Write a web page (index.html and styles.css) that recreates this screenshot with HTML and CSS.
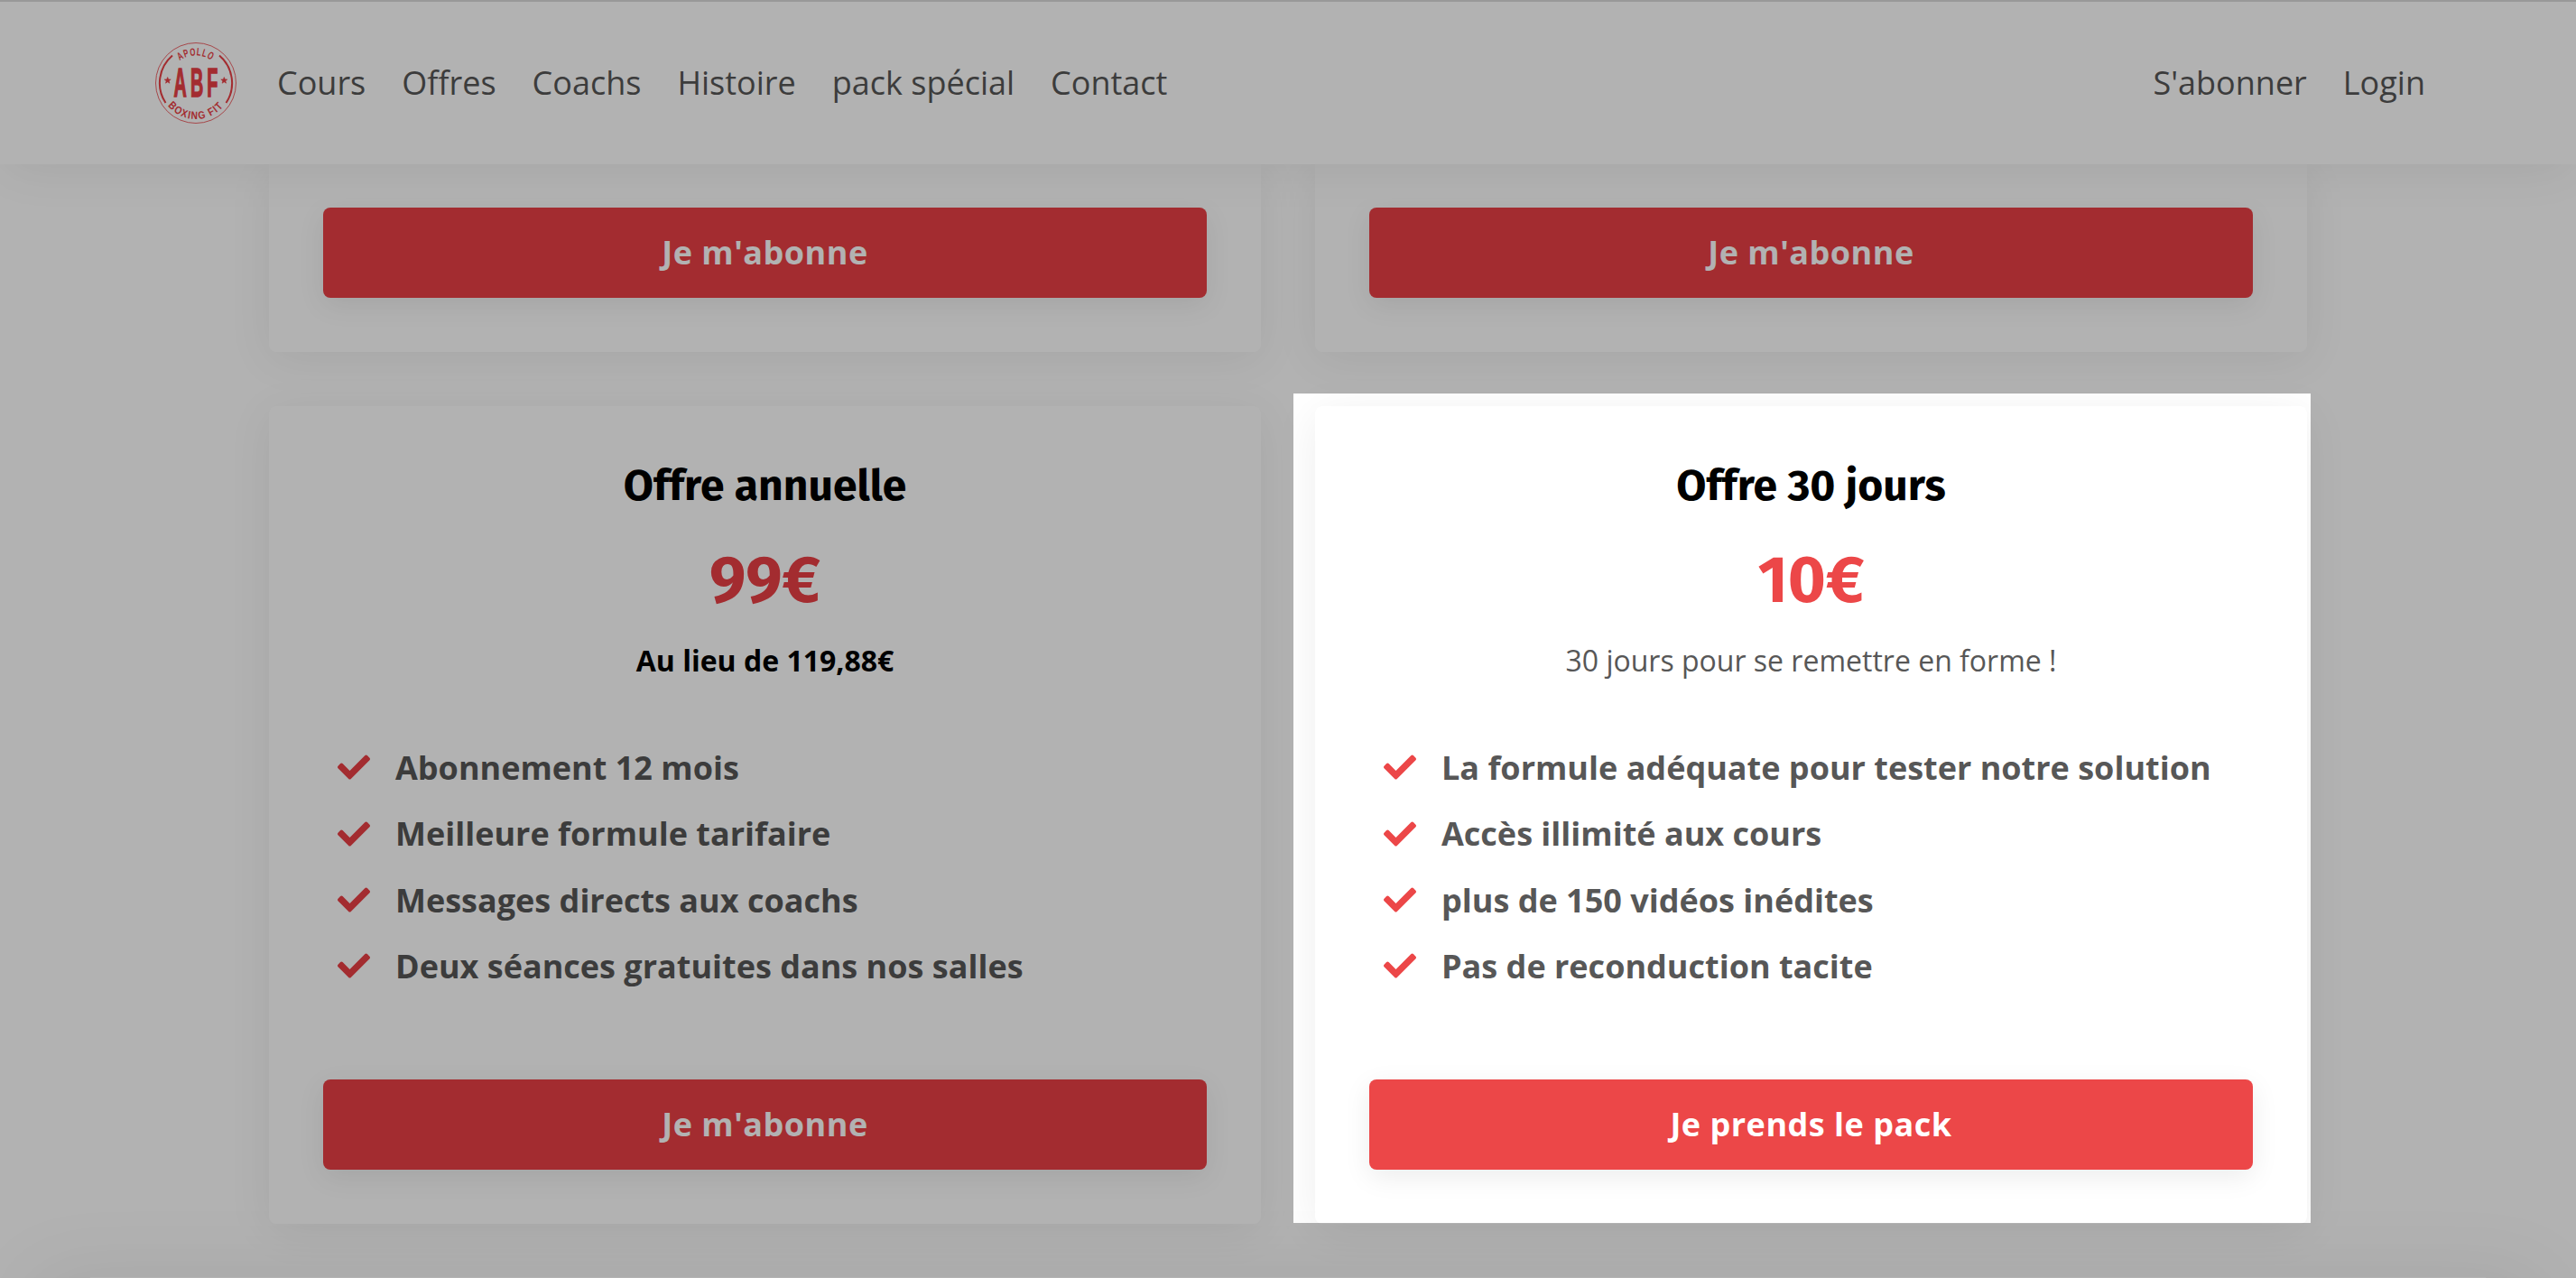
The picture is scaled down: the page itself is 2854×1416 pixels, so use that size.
FILE: index.html
```html
<!DOCTYPE html>
<html lang="fr">
<head>
  <meta charset="UTF-8" />
  <title>Apollo Boxing Fit - Offres</title>
  <link rel="stylesheet" href="styles.css">
</head>
<body>
  <svg class="defs" width="0" height="0">
    <symbol id="check" viewBox="0 0 512 512">
      <path d="M173.898 439.404l-166.4-166.4c-9.997-9.997-9.997-26.206 0-36.204l36.203-36.204c9.997-9.998 26.207-9.998 36.204 0L192 312.69 432.095 72.596c9.997-9.997 26.207-9.997 36.204 0l36.203 36.204c9.997 9.997 9.997 26.206 0 36.204l-294.4 294.401c-9.998 9.997-26.207 9.997-36.204-.001z" fill="currentColor" />
    </symbol>
  </svg>

  <header class="navbar">
    <a class="logo" href="#">
      <svg viewBox="0 0 90 90" width="90" height="90">
        <circle cx="45" cy="45" r="44.5" fill="none" stroke="currentColor" stroke-width="0.8" />
        <path d="M19 14.500A40 40 0 0 0 11.500 67M71 14.500A40 40 0 0 1 78.500 67" fill="none" stroke="currentColor" stroke-width="2" />
        <path id="arcTop" d="M14.500 45A30.500 30.500 0 0 1 75.500 45" fill="none" />
        <path id="arcBottom" d="M5 45A40 40 0 0 0 85 45" fill="none" />
        <text class="logo-arc" textLength="38" lengthAdjust="spacingAndGlyphs"><textPath href="#arcTop" startOffset="50%">APOLLO</textPath></text>
        <text class="logo-arc" textLength="71" lengthAdjust="spacingAndGlyphs"><textPath href="#arcBottom" startOffset="50%">BOXING FIT</textPath></text>
        <text class="logo-name" transform="translate(47 60) scale(.45 1)">ABF</text>
        <path d="M13.700 38.500l1 2.400 2.500.1-2 1.700.7 2.500-2.200-1.400-2.200 1.400.7-2.500-2-1.700 2.500-.1zM76.300 38.500l1 2.400 2.500.1-2 1.700.7 2.500-2.200-1.400-2.200 1.400.7-2.500-2-1.700 2.500-.1z" fill="currentColor" stroke="currentColor" stroke-width=".6" />
      </svg>
    </a>
    <nav class="links">
      <a href="#">Cours</a>
      <a href="#">Offres</a>
      <a href="#">Coachs</a>
      <a href="#">Histoire</a>
      <a href="#">pack spécial</a>
      <a href="#">Contact</a>
    </nav>
    <nav class="links account">
      <a href="#">S'abonner</a>
      <a href="#">Login</a>
    </nav>
  </header>

  <main class="offers">
    <section class="card card-cut">
      <a class="btn" href="#">Je m'abonne</a>
    </section>
    <section class="card card-cut">
      <a class="btn" href="#">Je m'abonne</a>
    </section>

    <section class="card">
      <h2>Offre annuelle</h2>
      <p class="price">99€</p>
      <p class="note strong">Au lieu de 119,88€</p>
      <ul class="features">
        <li><svg><use href="#check" /></svg>Abonnement 12 mois</li>
        <li><svg><use href="#check" /></svg>Meilleure formule tarifaire</li>
        <li><svg><use href="#check" /></svg>Messages directs aux coachs</li>
        <li><svg><use href="#check" /></svg>Deux séances gratuites dans nos salles</li>
      </ul>
      <a class="btn" href="#">Je m'abonne</a>
    </section>

    <section class="card card-active">
      <h2>Offre 30 jours</h2>
      <p class="price">10€</p>
      <p class="note">30 jours pour se remettre en forme !</p>
      <ul class="features">
        <li><svg><use href="#check" /></svg>La formule adéquate pour tester notre solution</li>
        <li><svg><use href="#check" /></svg>Accès illimité aux cours</li>
        <li><svg><use href="#check" /></svg>plus de 150 vidéos inédites</li>
        <li><svg><use href="#check" /></svg>Pas de reconduction tacite</li>
      </ul>
      <a class="btn" href="#">Je prends le pack</a>
    </section>
  </main>

  <footer class="footer"></footer>

  <!-- dims everything except the 30 day offer -->
  <div class="spotlight"></div>
</body>
</html>
```

FILE: styles.css
```css
* {
  box-sizing: border-box;
}
html {
  overflow: hidden;
}
body {
  margin: 0;
  height: 1416px;
  overflow: hidden;
  position: relative;
  background: #fff;
  color: #575757;
  font-family: "Open Sans", "Noto Sans", sans-serif;
  font-size: 36px;
}
a {
  color: inherit;
  text-decoration: none;
}
.defs {
  position: absolute;
}

/* Navbar */
.navbar {
  position: relative;
  z-index: 1;
  display: flex;
  align-items: center;
  height: 182px;
  padding: 0 167px 0 172px;
  border-top: 2px solid #dbdbdb;
  background: #fff;
  box-shadow: 0 12px 50px -8px rgba(0, 0, 0, 0.08);
}
.logo {
  height: 90px;
  margin-right: 45px;
  color: #ea4045;
}
.logo svg {
  display: block;
}
.logo-name {
  font: bold 44px "Liberation Sans", sans-serif;
  letter-spacing: 9px;
  text-anchor: middle;
  fill: currentColor;
  stroke: currentColor;
  stroke-width: 1.5px;
}
.logo-arc {
  font: bold 12px "Liberation Sans", sans-serif;
  letter-spacing: 1.5px;
  text-anchor: middle;
  fill: currentColor;
}
.links {
  display: flex;
  gap: 40px;
  padding-bottom: 2px;
}
.account {
  margin-left: auto;
}

/* Offers */
.offers {
  display: grid;
  grid-template-columns: 1fr 1fr;
  gap: 60px;
  width: 2258px;
  margin: 0 auto;
}
.card {
  display: flex;
  flex-direction: column;
  height: 906px;
  padding: 60px;
  border-radius: 8px;
  background: #fff;
  box-shadow: 0 8px 50px rgba(0, 0, 0, 0.07);
  text-align: center;
}
.card-cut {
  height: 208px;
  padding-top: 48px;
  border-radius: 0 0 8px 8px;
}
.card h2 {
  margin: 0;
  color: #000;
  font-family: "Fira Sans", "Open Sans", sans-serif;
  font-size: 48px;
  line-height: 56px;
}
.price {
  margin: 28px 0 0;
  color: #ea4045;
  font-family: "Fira Sans", "Open Sans", sans-serif;
  font-size: 72px;
  font-weight: bold;
  line-height: 98px;
}
.note {
  margin: 18px 0 0;
  font-size: 32px;
  line-height: 44px;
}
.strong {
  color: #000;
  font-weight: bold;
}
.features {
  margin: 59.6px 0 0;
  padding: 0 16px;
  list-style: none;
  text-align: left;
  font-weight: bold;
}
.features li {
  display: flex;
  align-items: center;
  height: 73.4px;
}
.features svg {
  width: 36px;
  height: 36px;
  margin-right: 28px;
  color: #ea4045;
}
.btn {
  height: 100px;
  margin-top: auto;
  border-radius: 8px;
  background: #ea4045;
  box-shadow: 0 8px 30px rgba(0, 0, 0, 0.08);
  color: #fff;
  font-weight: bold;
  line-height: 100px;
  letter-spacing: 0.5px;
}
.card-active .btn {
  background: #ec4748;
}
.card-active .price,
.card-active .features svg {
  color: #ec4748;
}

/* only the top shadow of the footer shows above the fold */
.footer {
  height: 1px;
  margin: 59px 100px 0;
  background: #fff;
  box-shadow: 0 60px 90px 60px rgba(0, 0, 0, 0.08);
}

.spotlight {
  position: absolute;
  z-index: 2;
  top: 436px;
  left: 1433px;
  width: 1127px;
  height: 919px;
  box-shadow: 0 0 0 3000px rgba(0, 0, 0, 0.3);
}
```
